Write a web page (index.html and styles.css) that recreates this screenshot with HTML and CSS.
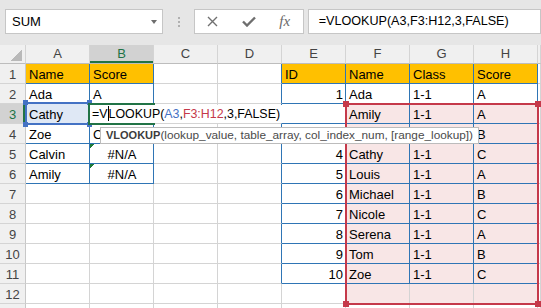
FILE: index.html
```html
<!DOCTYPE html>
<html>

<head>
    <title>VLOOKUP</title>

    <link rel="stylesheet" href="styles.css">
</head>

<body>
    <div class="formula-bar">
        <div class="name-box">SUM<span class="drop"></span></div>
        <div class="grip"><i></i><i></i><i></i></div>
        <div class="fx-buttons">
            <span class="fx-btn">
                <svg width="11" height="11" viewBox="0 0 11 11">
                    <path d="M1 1 L10 10 M10 1 L1 10" stroke="#707070" stroke-width="1.4" fill="none" />
                </svg>
            </span>
            <span class="fx-btn">
                <svg width="14" height="11" viewBox="0 0 14 11">
                    <path d="M1 5.5 L5 9.5 L13 1.5" stroke="#6e6e6e" stroke-width="2.4" fill="none" />
                </svg>
            </span>
            <span class="fx-btn fx">fx</span>
        </div>
        <div class="formula-input">=VLOOKUP(A3,F3:H12,3,FALSE)</div>
    </div>

    <div class="sheet-wrap">
        <table class="sheet">
            <colgroup>
                <col class="c-rh">
                <col class="c-col"><col class="c-col"><col class="c-col"><col class="c-col">
                <col class="c-col"><col class="c-col"><col class="c-col"><col class="c-col">
                <col>
            </colgroup>
            <tr class="col-heads">
                <th class="corner"></th>
                <th>A</th><th class="active">B</th><th>C</th><th>D</th>
                <th>E</th><th>F</th><th>G</th><th>H</th><th></th>
            </tr>
            <tr>
                <th>1</th>
                <td class="t hd">Name</td><td class="t hd">Score</td><td></td><td class="edge"></td>
                <td class="t hd">ID</td><td class="t hd">Name</td><td class="t hd">Class</td><td class="t hd">Score</td><td></td>
            </tr>
            <tr>
                <th>2</th>
                <td class="t">Ada</td><td class="t">A</td><td></td><td class="edge"></td>
                <td class="t num">1</td><td class="t">Ada</td><td class="t">1-1</td><td class="t">A</td><td></td>
            </tr>
            <tr>
                <th class="active">3</th>
                <td class="t ref">Cathy</td><td class="t"></td><td></td><td class="edge"></td>
                <td class="t num"></td><td class="t pk">Amily</td><td class="t pk">1-1</td><td class="t pk">A</td><td></td>
            </tr>
            <tr>
                <th>4</th>
                <td class="t">Zoe</td><td class="t">C</td><td></td><td class="edge"></td>
                <td class="t num"></td><td class="t pk"></td><td class="t pk"></td><td class="t pk">B</td><td></td>
            </tr>
            <tr>
                <th>5</th>
                <td class="t">Calvin</td><td class="t err">#N/A</td><td></td><td class="edge"></td>
                <td class="t num">4</td><td class="t pk">Cathy</td><td class="t pk">1-1</td><td class="t pk">C</td><td></td>
            </tr>
            <tr>
                <th>6</th>
                <td class="t">Amily</td><td class="t err">#N/A</td><td></td><td class="edge"></td>
                <td class="t num">5</td><td class="t pk">Louis</td><td class="t pk">1-1</td><td class="t pk">A</td><td></td>
            </tr>
            <tr>
                <th>7</th>
                <td></td><td></td><td></td><td class="edge"></td>
                <td class="t num">6</td><td class="t pk">Michael</td><td class="t pk">1-1</td><td class="t pk">B</td><td></td>
            </tr>
            <tr>
                <th>8</th>
                <td></td><td></td><td></td><td class="edge"></td>
                <td class="t num">7</td><td class="t pk">Nicole</td><td class="t pk">1-1</td><td class="t pk">C</td><td></td>
            </tr>
            <tr>
                <th>9</th>
                <td></td><td></td><td></td><td class="edge"></td>
                <td class="t num">8</td><td class="t pk">Serena</td><td class="t pk">1-1</td><td class="t pk">A</td><td></td>
            </tr>
            <tr>
                <th>10</th>
                <td></td><td></td><td></td><td class="edge"></td>
                <td class="t num">9</td><td class="t pk">Tom</td><td class="t pk">1-1</td><td class="t pk">B</td><td></td>
            </tr>
            <tr>
                <th>11</th>
                <td></td><td></td><td></td><td class="edge"></td>
                <td class="t num">10</td><td class="t pk">Zoe</td><td class="t pk">1-1</td><td class="t pk">C</td><td></td>
            </tr>
            <tr>
                <th>12</th>
                <td></td><td></td><td></td><td></td>
                <td></td><td class="pk"></td><td class="pk"></td><td class="pk"></td><td></td>
            </tr>
            <tr>
                <th></th>
                <td></td><td></td><td></td><td></td>
                <td></td><td></td><td></td><td></td><td></td>
            </tr>
        </table>

        <!-- reference highlight on A3 -->
        <div class="range range-a3">
            <i class="sq tl"></i><i class="sq tr"></i><i class="sq bl"></i><i class="sq br"></i>
        </div>

        <!-- reference highlight on F3:H12 -->
        <div class="range range-f3">
            <i class="sq tl"></i><i class="sq tr"></i><i class="sq bl"></i><i class="sq br"></i>
        </div>

        <!-- active cell B3 in edit mode -->
        <div class="active-cell"></div>
        <div class="edit-box">=V<span class="caret"></span>LOOKUP(<span class="ref-blue">A3</span>,<span class="ref-red">F3:H12</span>,3,FALSE)</div>

        <div class="tip"><b>VLOOKUP</b>(lookup_value, table_array, col_index_num, [range_lookup])</div>
    </div>
</body>

</html>
```

FILE: styles.css
```css
body {
    margin: 0;
    width: 541px;
    height: 308px;
    overflow: hidden;
    background-color: #ffffff;
    font-family: 'Liberation Sans', Arial, sans-serif;
    color: #000000;
}

/* formula bar */

.formula-bar {
    display: flex;
    align-items: flex-start;
    height: 45px;
    box-sizing: border-box;
    padding: 9px 0 0 5px;
    background-color: #e6e6e6;
}

.name-box {
    display: flex;
    align-items: center;
    justify-content: space-between;
    width: 162px;
    height: 25px;
    box-sizing: border-box;
    padding: 0 6px 0 6px;
    background-color: #ffffff;
    border: 1px solid #c6c6c6;
    font-size: 13px;
}

.drop {
    width: 0;
    height: 0;
    border-left: 3.5px solid transparent;
    border-right: 3.5px solid transparent;
    border-top: 4px solid #6d6d6d;
    margin-right: -1px;
}

.grip {
    display: flex;
    flex-direction: column;
    gap: 2px;
    margin: 8px 0 0 15px;
}

.grip i {
    display: block;
    width: 2px;
    height: 2px;
    background-color: #b0b0b0;
}

.fx-buttons {
    display: flex;
    width: 110px;
    height: 25px;
    box-sizing: border-box;
    margin-left: 14px;
    background-color: #ffffff;
    border: 1px solid #c6c6c6;
}

.fx-btn {
    display: flex;
    align-items: center;
    justify-content: center;
    width: 36px;
}

.fx {
    font-family: 'Liberation Serif', 'Times New Roman', serif;
    font-style: italic;
    font-size: 15px;
    color: #6a6a6a;
    padding-bottom: 1px;
}

.formula-input {
    width: 240px;
    height: 25px;
    box-sizing: border-box;
    margin-left: 4px;
    padding-left: 10px;
    background-color: #ffffff;
    border: 1px solid #c6c6c6;
    font-size: 12.6px;
    line-height: 23px;
    white-space: nowrap;
}

/* worksheet */

.sheet-wrap {
    position: relative;
}

.sheet {
    border-collapse: separate;
    border-spacing: 0;
    table-layout: fixed;
    width: 541px;
    font-size: 13px;
}

.c-rh {
    width: 26px;
}

.c-col {
    width: 64px;
}

.sheet th,
.sheet td {
    box-sizing: border-box;
    height: 20px;
    padding: 0 2px 0 3px;
    border-right: 1px solid #d4d4d4;
    border-bottom: 1px solid #d4d4d4;
    line-height: 17px;
    vertical-align: bottom;
    white-space: nowrap;
    overflow: hidden;
    text-align: left;
    font-weight: normal;
}

.sheet th {
    padding: 0;
    text-align: center;
    background-color: #f0f0f0;
    color: #444444;
    border-right-color: #c8c8c8;
    border-bottom-color: #d4d4d4;
}

.col-heads th {
    height: 19px;
    line-height: 18px;
    vertical-align: middle;
    border-right-color: #d4d4d4;
    border-bottom-color: #bdbdbd;
}

.sheet th.active {
    background-color: #d2d2d2;
    color: #217346;
}

.col-heads th.active {
    box-shadow: inset 0 -2px 0 #217346;
}

.sheet tr th.active:first-child {
    box-shadow: inset -2px 0 0 #217346;
}

.corner {
    background-image: linear-gradient(to bottom right, transparent 50%, #b9b9b9 50%);
    background-size: 12px 12px;
    background-position: right 3px bottom 2px;
    background-repeat: no-repeat;
}

.sheet td.t {
    border-right-color: #2f75b5;
    border-bottom-color: #2f75b5;
}

.sheet td.edge {
    border-right-color: #2f75b5;
}

.hd {
    background-color: #ffc000;
}

.num {
    text-align: right !important;
}

.pk {
    background-color: #f8e6e6;
}

.ref {
    background-color: #dfe8f5;
}

.err {
    text-align: center !important;
    background-image: linear-gradient(135deg, #1e7a3a 3px, transparent 3px);
    background-repeat: no-repeat;
}

/* overlays */

.range {
    position: absolute;
    box-sizing: border-box;
    border: 2px solid;
}

.range-a3 {
    left: 25px;
    top: 57px;
    width: 65px;
    height: 23px;
    border-color: #4472c4;
    color: #4472c4;
}

.range-f3 {
    left: 345px;
    top: 58px;
    width: 194px;
    height: 202px;
    border-color: #c5394a;
    color: #c5394a;
}

.sq {
    position: absolute;
    width: 6px;
    height: 6px;
    background-color: currentColor;
}

.range-a3 .sq {
    width: 5px;
    height: 5px;
}

.sq.tl { left: -4px; top: -4px; }
.sq.tr { right: -4px; top: -4px; }
.sq.bl { left: -4px; bottom: -4px; }
.sq.br { right: -4px; bottom: -4px; }

.active-cell {
    position: absolute;
    left: 88px;
    top: 58px;
    width: 67px;
    height: 22px;
    box-sizing: border-box;
    border: 2px solid #217346;
}

.edit-box {
    position: absolute;
    left: 90px;
    top: 60px;
    width: 253px;
    height: 18px;
    padding-left: 2px;
    box-sizing: border-box;
    background-color: #ffffff;
    font-size: 12.4px;
    line-height: 18px;
    white-space: nowrap;
}

.caret {
    display: inline-block;
    width: 0;
    height: 15px;
    border-left: 1px solid #000000;
    vertical-align: -3px;
}

.ref-blue {
    color: #4472c4;
}

.ref-red {
    color: #c5394a;
}

.tip {
    position: absolute;
    left: 100px;
    top: 82px;
    width: 379px;
    height: 17px;
    box-sizing: border-box;
    padding-left: 5px;
    background-color: #ffffff;
    border: 1px solid #bcbcbc;
    color: #4a4a4a;
    font-size: 11.8px;
    line-height: 15px;
    white-space: nowrap;
}

.tip b {
    color: #3c3c3c;
    font-size: 11px;
}
```
